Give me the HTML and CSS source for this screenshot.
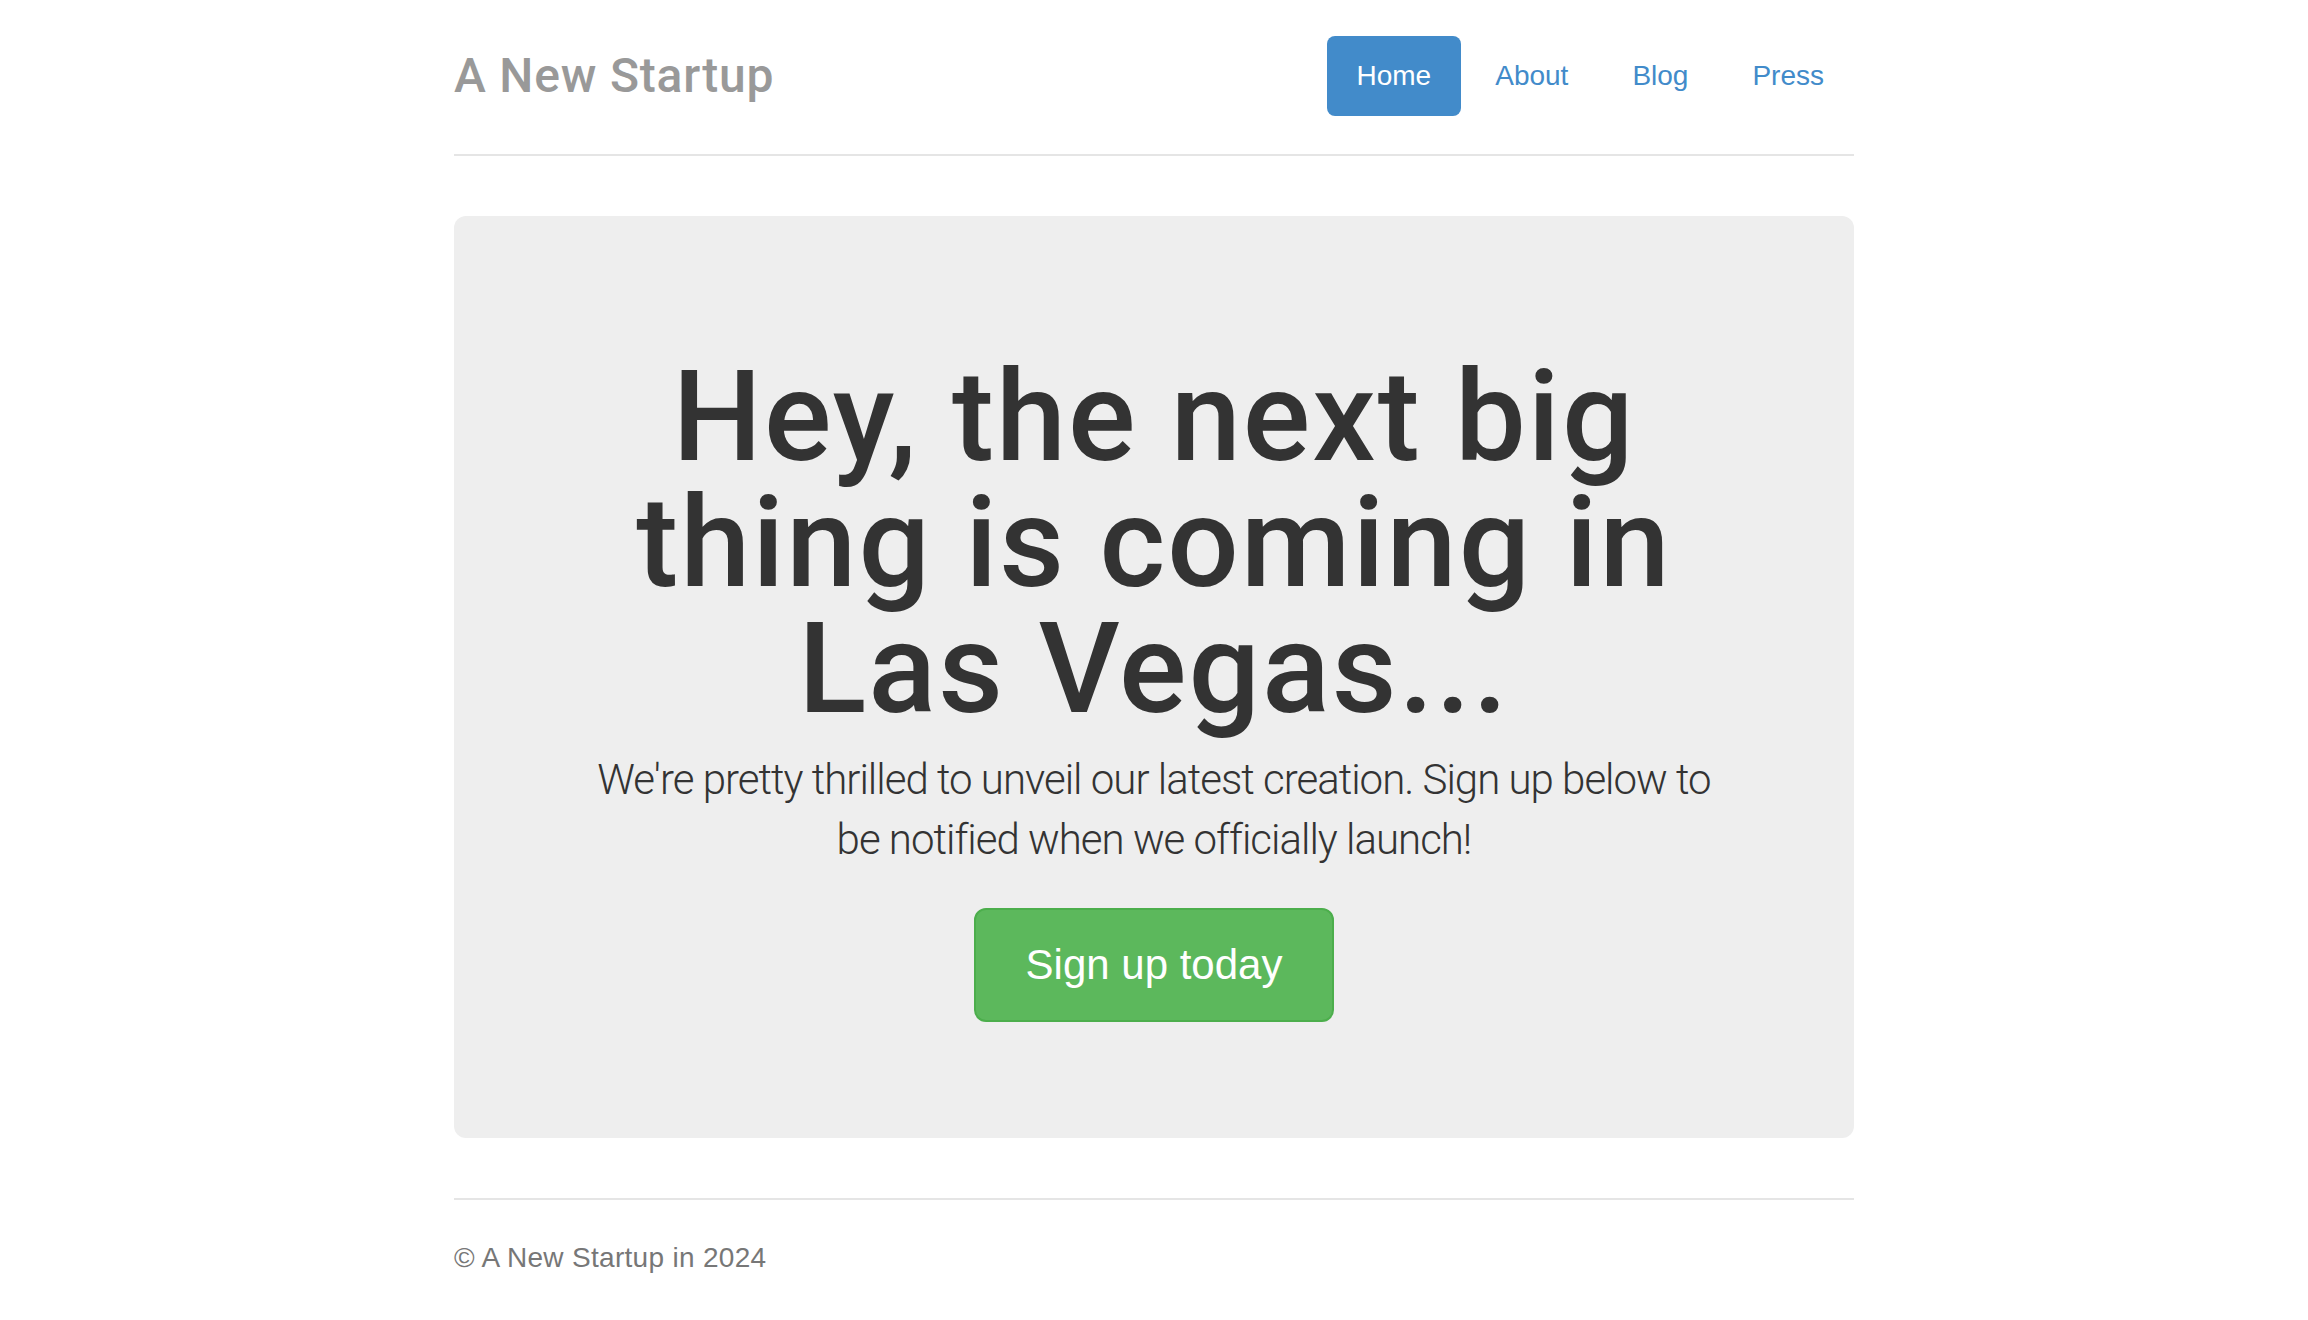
FILE: index.html
```html
<!DOCTYPE html>
<html lang="en">
<head>
<meta charset="utf-8">
<title>A New Startup</title>
<link rel="stylesheet" href="styles.css">
</head>
<body>
<div class="container">
  <header class="header">
    <h3 class="brand">A New Startup</h3>
    <nav>
      <ul class="pills">
        <li class="pill active"><a href="#">Home</a></li>
        <li class="pill"><a href="#">About</a></li>
        <li class="pill"><a href="#">Blog</a></li>
        <li class="pill"><a href="#">Press</a></li>
      </ul>
    </nav>
  </header>

  <section class="jumbotron">
    <h1 class="headline">Hey, the next big thing is coming in Las Vegas...</h1>
    <p class="lead">We're pretty thrilled to unveil our latest creation. Sign up below to be notified when we officially launch!</p>
    <div class="cta"><a class="btn-signup" href="#">Sign up today</a></div>
  </section>

  <footer class="footer">
    <p>&copy; A New Startup in 2024</p>
  </footer>
</div>
</body>
</html>
```
FILE: styles.css
```css
* { box-sizing: border-box; }
html, body { margin: 0; padding: 0; background: #fff; }
body {
  font-family: "Liberation Sans", Arial, sans-serif;
  color: #333;
  padding-top: 36px;
}
.container {
  width: 1400px;
  margin: 0 auto;
}
.header {
  display: flex;
  justify-content: space-between;
  align-items: flex-start;
  padding-bottom: 38px;
  border-bottom: 2px solid #e5e5e5;
  margin-bottom: 60px;
}
.brand {
  margin: 0;
  font-family: Roboto, "Liberation Sans", sans-serif;
  font-size: 48px;
  line-height: 80px;
  font-weight: 500;
  letter-spacing: 0.8px;
  color: #999;
}
.pills {
  list-style: none;
  margin: 0;
  padding: 0;
  display: flex;
}
.pill { margin-left: 4px; }
.pill a {
  display: block;
  padding: 20px 30px;
  font-size: 28px;
  line-height: 40px;
  color: #428bca;
  text-decoration: none;
  border-radius: 8px;
}
.pill.active a {
  background: #428bca;
  color: #fff;
}
.jumbotron {
  background: #eee;
  border-radius: 12px;
  padding: 96px 120px;
  text-align: center;
}
.headline {
  margin: 42px 0 18px;
  font-family: Roboto, "Liberation Sans", sans-serif;
  font-size: 126px;
  line-height: 126px;
  font-weight: 500;
  letter-spacing: 2px;
  color: #333;
}
.lead {
  margin: 0 0 30px;
  font-family: Roboto, "Liberation Sans", sans-serif;
  font-weight: 300;
  font-size: 42px;
  line-height: 60px;
  letter-spacing: -1px;
  color: #333;
}
.cta {
  margin-top: 38px;
  margin-bottom: 20px;
  display: flex;
  justify-content: center;
}
.btn-signup {
  display: block;
  padding: 28px 50px;
  font-size: 42px;
  line-height: 54px;
  color: #fff;
  background: #5cb85c;
  border: 2px solid #4cae4c;
  border-radius: 12px;
  text-decoration: none;
}
.footer {
  margin-top: 60px;
  padding-top: 38px;
  border-top: 2px solid #e5e5e5;
  color: #777;
}
.footer p {
  margin: 0;
  font-size: 28px;
  line-height: 40px;
  letter-spacing: 0.3px;
}
```
